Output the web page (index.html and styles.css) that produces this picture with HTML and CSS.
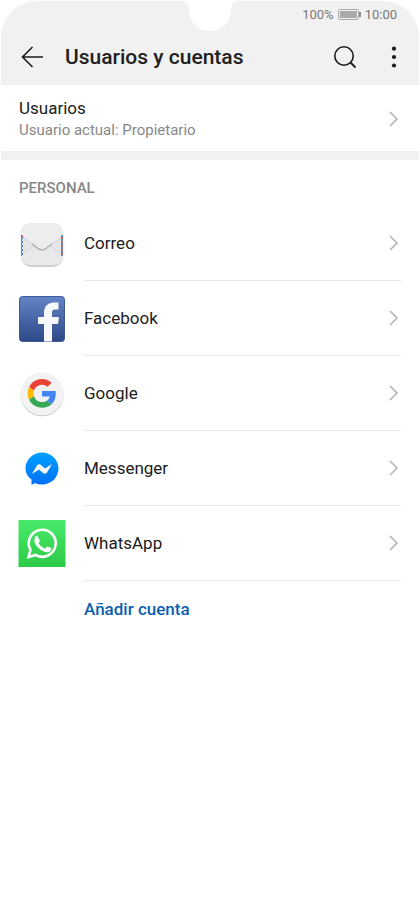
FILE: index.html
```html
<!DOCTYPE html>
<html lang="es">
<head>
<meta charset="utf-8">
<meta name="viewport" content="width=device-width, initial-scale=1">
<title>Usuarios y cuentas</title>
<link rel="stylesheet" href="styles.css">
</head>
<body>
<div class="screen">
  <header class="header">
    <svg class="notch" viewBox="0 0 58 30" aria-hidden="true"><path d="M0 0C5 0 7 3 8 9C8 21 17 30 29 30S50 21 50 9C51 3 53 0 58 0Z" fill="#fff"/></svg>
    <div class="status">
      <span>100%</span>
      <svg width="23" height="12" viewBox="0 0 23 12" aria-hidden="true"><rect x=".5" y=".5" width="20" height="10" rx="1.5" fill="#f1f1f1" stroke="#aaa"/><rect x="2" y="2" width="17" height="7" fill="#aaa"/><path d="M22 3v5" stroke="#777" stroke-width="1.6"/></svg>
      <time>10:00</time>
    </div>
    <div class="toolbar">
      <button class="icon-button" type="button" aria-label="Atrás"><svg width="24" height="24" viewBox="0 0 24 24"><path d="M13.5 2L3.500 12L13.500 22M3.500 12H24" fill="none" stroke="#1b1b1b" stroke-width="1.6"/></svg></button>
      <h1>Usuarios y cuentas</h1>
      <button class="icon-button search" type="button" aria-label="Buscar"><svg width="24" height="24" viewBox="0 0 24 24"><circle cx="11" cy="11" r="9.2" fill="none" stroke="#1b1b1b" stroke-width="1.6"/><path d="M17.500 17.500L22.500 22.500" stroke="#1b1b1b" stroke-width="1.8"/></svg></button>
      <button class="icon-button more" type="button" aria-label="Más opciones"><svg width="6" height="24" viewBox="0 0 6 24" fill="#1b1b1b"><circle cx="3" cy="3.7" r="2.1"/><circle cx="3" cy="12" r="2.1"/><circle cx="3" cy="20.5" r="2.1"/></svg></button>
    </div>
  </header>
  <main>
    <a class="users" href="#usuarios">
      <span class="users-text"><span class="name">Usuarios</span><span class="detail">Usuario actual: Propietario</span></span>
      <svg class="chevron" viewBox="0 0 10 16"><path d="M1 1L8 8L1 15"/></svg>
    </a>
    <section class="accounts">
      <h2>PERSONAL</h2>
      <ul>
        <li><a class="account" href="#correo">
          <svg class="logo" viewBox="0 0 48 48" aria-hidden="true">
            <defs><linearGradient id="mail" x2="0" y2="1"><stop stop-color="#e3e3e3"/><stop offset="1" stop-color="#e8e8e8"/></linearGradient></defs>
            <rect x="3" y="4" width="42" height="43" rx="10" fill="#d0d0d0"/><rect x="3" y="3" width="42" height="42" rx="10" fill="url(#mail)"/>
            <path d="M3 34L18 23H30L45 34V35Q45 45 35 45H13Q3 45 3 35Z" fill="#e9e9e9"/>
            <path d="M3 16L20 28.500Q24 31.500 28 28.500L45 16V13Q45 3 35 3H13Q3 3 3 13Z" fill="#ededed"/>
            <path d="M3 16L20 28.500Q24 31.500 28 28.500L45 16" fill="none" stroke="#d2d2d2"/>
            <path d="M14 24L20 28.500Q24 31.500 28 28.500L34 24" fill="none" stroke="#aaa" stroke-width="1.200"/>
            <path d="M4 34L16 26M32 26L44 34" stroke="#d4d4d4"/>
            <path d="M3.500 15V36M43.500 17V36" stroke="#4a7ec0" stroke-width="1" stroke-dasharray="2 2"/>
            <path d="M4.500 17V36M44.500 15V36" stroke="#4a7ec0" stroke-width="1" stroke-dasharray="2 2"/>
            <path d="M3.500 17V36M43.500 15V36" stroke="#df7272" stroke-width="1" stroke-dasharray="2 2"/>
            <path d="M4.500 15V17M44.500 17V36" stroke="#df7272" stroke-width="1" stroke-dasharray="2 2"/>
          </svg><span class="row"><span class="name">Correo</span><svg class="chevron" viewBox="0 0 10 16"><path d="M1 1L8 8L1 15"/></svg></span></a></li>
        <li><a class="account" href="#facebook">
          <svg class="logo" viewBox="0 0 48 48" aria-hidden="true">
            <defs><linearGradient id="fb" x2="0" y2="1"><stop stop-color="#6484c7"/><stop offset="1" stop-color="#2c4986"/></linearGradient></defs>
            <rect x="1.500" y="1.500" width="45" height="45" rx="3" fill="url(#fb)" stroke="#3d5a99"/>
            <path d="M26 46.500V29H20V22H26V18C26 11 30 7.500 36 7.500H40.500V14.500H37.500C34.500 14.500 34 16 34 18.500V22H41L40 29H34V46.500Z" fill="#f6f8fc"/>
          </svg><span class="row"><span class="name">Facebook</span><svg class="chevron" viewBox="0 0 10 16"><path d="M1 1L8 8L1 15"/></svg></span></a></li>
        <li><a class="account" href="#google">
          <svg class="logo" viewBox="0 0 48 48" aria-hidden="true">
            <circle cx="24" cy="24.800" r="21.500" fill="#c9c9c9"/><circle cx="24" cy="23.800" r="21.500" fill="#f2f2f2"/>
            <g transform="translate(9.600 9) scale(.6)">
            <path fill="#eb4335" d="M24 9.500c3.540 0 6.710 1.220 9.210 3.600l6.850-6.850C35.900 2.380 30.470 0 24 0 14.620 0 6.510 5.380 2.560 13.220l7.980 6.190C12.430 13.720 17.740 9.500 24 9.500z"/>
            <path fill="#4285f4" d="M46.980 24.550c0-1.570-.15-3.090-.38-4.550H24v9.020h12.940c-.58 2.960-2.260 5.480-4.780 7.180l7.730 6c4.510-4.180 7.090-10.360 7.090-17.650z"/>
            <path fill="#fbbc05" d="M10.530 28.590A14.500 14.500 0 0 1 10.530 19.410l-7.980-6.190A24 24 0 0 0 2.560 34.780z"/>
            <path fill="#34a853" d="M24 48c6.480 0 11.930-2.130 15.890-5.810l-7.730-6C30.010 37.640 27.240 38.500 24 38.500c-6.260 0-11.570-4.220-13.470-9.910l-7.980 6.190C6.510 42.620 14.620 48 24 48z"/></g>
          </svg><span class="row"><span class="name">Google</span><svg class="chevron" viewBox="0 0 10 16"><path d="M1 1L8 8L1 15"/></svg></span></a></li>
        <li><a class="account" href="#messenger">
          <svg class="logo" viewBox="0 0 48 48" aria-hidden="true">
            <defs><linearGradient id="ms" x2="0" y2="1"><stop stop-color="#00a0ff"/><stop offset="1" stop-color="#0070f8"/></linearGradient></defs>
            <path d="M24 7.500C33 7.500 40.500 14.500 40.500 23.500S33 39.500 24 39.500Q20 39.500 17 38L13.500 40V34.500C9.500 31.500 7.500 28 7.500 23.500C7.500 14.500 15 7.500 24 7.500Z" fill="url(#ms)"/>
            <path d="M14 29L19 20.500Q21 18.500 23 20L27 23.500L34 19L29 27.500Q27 29.500 25 28L21 24.500Z" fill="#fff"/>
          </svg><span class="row"><span class="name">Messenger</span><svg class="chevron" viewBox="0 0 10 16"><path d="M1 1L8 8L1 15"/></svg></span></a></li>
        <li><a class="account" href="#whatsapp">
          <svg class="logo" viewBox="0 0 48 48" aria-hidden="true">
            <defs><linearGradient id="wa" x2="0" y2="1"><stop stop-color="#49e96a"/><stop offset="1" stop-color="#2bcb48"/></linearGradient></defs>
            <path d="M.5 0H47.500V47H.5Z" fill="url(#wa)"/>
            <path d="M10.500 37L12.500 30A13.500 13.500 0 1 1 17.500 35Z" fill="none" stroke="#fff" stroke-width="2.600"/>
            <path d="M19.500 16L21.800 20.500Q22 21.500 20.500 23Q22.500 27 27 28.800L29 26.500Q30 26 33 28Q34 28.500 33 30.500C31 33 28 32.500 25 31C20 28.500 17.500 25 16.500 22C16 18.500 17.500 15 19.500 16Z" fill="#fff"/>
          </svg><span class="row"><span class="name">WhatsApp</span><svg class="chevron" viewBox="0 0 10 16"><path d="M1 1L8 8L1 15"/></svg></span></a></li>
      </ul>
      <button class="add" type="button">Añadir cuenta</button>
    </section>
  </main>
</div>
</body>
</html>
```
FILE: styles.css
```css
* { box-sizing: border-box; }
body { margin: 0; background: #fff; color: #202020; font-family: Roboto, "Liberation Sans", sans-serif; font-size: 17px; line-height: 22px; }
h1, h2, ul { margin: 0; padding: 0; }
ul { list-style: none; }
a { color: inherit; text-decoration: none; }
button { border: 0; padding: 0; background: none; font: inherit; cursor: pointer; }
svg { display: block; flex: none; }
.screen { min-height: 100vh; padding: 1px 1px 0; }
.header { position: relative; background: #f1f1f1; border-radius: 36px 36px 0 0; padding: 4px 18px 8px; }
.notch { position: absolute; top: 0; left: 50%; width: 58px; margin-left: -29px; }
.status { display: flex; align-items: center; justify-content: flex-end; gap: 4px; padding-right: 4px; height: 20px; color: #777; font-size: 13px; }
.toolbar { display: flex; align-items: center; height: 52px; padding-top: 12px; }
.icon-button { display: flex; align-items: center; justify-content: center; height: 36px; }
h1 { flex: 1; margin-left: 22px; font-size: 21px; font-weight: 500; line-height: 28px; }
.search { margin-right: 34px; }
.more { margin-right: 4px; }
.users { display: flex; align-items: center; justify-content: space-between; padding: 12px 18px 10px; border-bottom: 9px solid #f1f1f1; }
.users-text { display: flex; flex-direction: column; }
.detail { color: #888; font-size: 15px; }
.chevron { width: 10px; height: 16px; margin-right: 2px; fill: none; stroke: #b2b2b2; stroke-width: 1.5; }
.accounts { padding: 17px 18px 0; }
h2 { color: #888; font-size: 15px; font-weight: 500; line-height: 22px; padding-bottom: 7px; }
.account { display: flex; align-items: center; gap: 18px; height: 75px; }
.logo { width: 48px; height: 48px; margin-left: -1px; }
.row { display: flex; flex: 1; align-items: center; justify-content: space-between; height: 100%; border-bottom: 1px solid #e8e8e8; }
.add { display: block; margin-left: 65px; padding: 17px 0; color: #0a5fb0; font-weight: 500; }
```
